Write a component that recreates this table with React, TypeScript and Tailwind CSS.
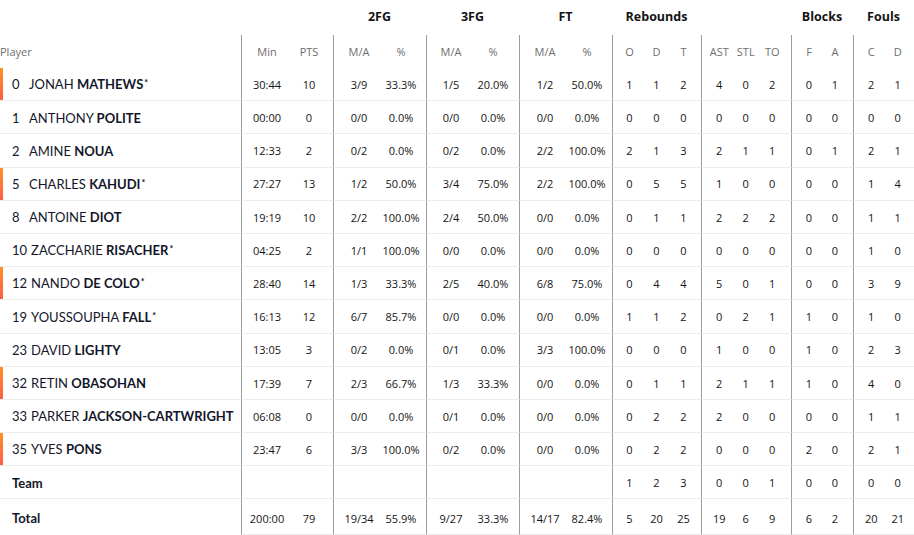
import React from "react";

type Row = {
  n: string;
  first: string;
  last: string;
  star?: boolean;
  bar?: boolean;
  s: string[];
};

const rows: Row[] = [
  { n: "0", first: "JONAH", last: "MATHEWS", star: true, bar: true, s: ["30:44", "10", "3/9", "33.3%", "1/5", "20.0%", "1/2", "50.0%", "1", "1", "2", "4", "0", "2", "0", "1", "2", "1"] },
  { n: "1", first: "ANTHONY", last: "POLITE", s: ["00:00", "0", "0/0", "0.0%", "0/0", "0.0%", "0/0", "0.0%", "0", "0", "0", "0", "0", "0", "0", "0", "0", "0"] },
  { n: "2", first: "AMINE", last: "NOUA", s: ["12:33", "2", "0/2", "0.0%", "0/2", "0.0%", "2/2", "100.0%", "2", "1", "3", "2", "1", "1", "0", "1", "2", "1"] },
  { n: "5", first: "CHARLES", last: "KAHUDI", star: true, bar: true, s: ["27:27", "13", "1/2", "50.0%", "3/4", "75.0%", "2/2", "100.0%", "0", "5", "5", "1", "0", "0", "0", "0", "1", "4"] },
  { n: "8", first: "ANTOINE", last: "DIOT", s: ["19:19", "10", "2/2", "100.0%", "2/4", "50.0%", "0/0", "0.0%", "0", "1", "1", "2", "2", "2", "0", "0", "1", "1"] },
  { n: "10", first: "ZACCHARIE", last: "RISACHER", star: true, s: ["04:25", "2", "1/1", "100.0%", "0/0", "0.0%", "0/0", "0.0%", "0", "0", "0", "0", "0", "0", "0", "0", "1", "0"] },
  { n: "12", first: "NANDO", last: "DE COLO", star: true, bar: true, s: ["28:40", "14", "1/3", "33.3%", "2/5", "40.0%", "6/8", "75.0%", "0", "4", "4", "5", "0", "1", "0", "0", "3", "9"] },
  { n: "19", first: "YOUSSOUPHA", last: "FALL", star: true, s: ["16:13", "12", "6/7", "85.7%", "0/0", "0.0%", "0/0", "0.0%", "1", "1", "2", "0", "2", "1", "1", "0", "1", "0"] },
  { n: "23", first: "DAVID", last: "LIGHTY", s: ["13:05", "3", "0/2", "0.0%", "0/1", "0.0%", "3/3", "100.0%", "0", "0", "0", "1", "0", "0", "1", "0", "2", "3"] },
  { n: "32", first: "RETIN", last: "OBASOHAN", bar: true, s: ["17:39", "7", "2/3", "66.7%", "1/3", "33.3%", "0/0", "0.0%", "0", "1", "1", "2", "1", "1", "1", "0", "4", "0"] },
  { n: "33", first: "PARKER", last: "JACKSON-CARTWRIGHT", s: ["06:08", "0", "0/0", "0.0%", "0/1", "0.0%", "0/0", "0.0%", "0", "2", "2", "2", "0", "0", "0", "0", "1", "1"] },
  { n: "35", first: "YVES", last: "PONS", bar: true, s: ["23:47", "6", "3/3", "100.0%", "0/2", "0.0%", "0/0", "0.0%", "0", "2", "2", "0", "0", "0", "2", "0", "2", "1"] },
];

const teamStats = ["", "", "", "", "", "", "", "", "1", "2", "3", "0", "0", "1", "0", "0", "0", "0"];
const totalStats = ["200:00", "79", "19/34", "55.9%", "9/27", "33.3%", "14/17", "82.4%", "5", "20", "25", "19", "6", "9", "6", "2", "20", "21"];

type Group = { w: string; pad: string; cols: string[]; title: string; labels: string[] };

const groups: Group[] = [
  { w: "w-[92px]", pad: "pl-[4px] pr-[3px]", cols: ["w-[42px]", "w-[42px]"], title: "", labels: ["Min", "PTS"] },
  { w: "w-[93px]", pad: "pl-[4px] pr-[4px]", cols: ["w-[42px]", "w-[42px]"], title: "2FG", labels: ["M/A", "%"] },
  { w: "w-[93px]", pad: "pl-[3px] pr-[5px]", cols: ["w-[42px]", "w-[42px]"], title: "3FG", labels: ["M/A", "%"] },
  { w: "w-[93px]", pad: "pl-[4px] pr-[4px]", cols: ["w-[42px]", "w-[42px]"], title: "FT", labels: ["M/A", "%"] },
  { w: "w-[89px]", pad: "pl-[3px] pr-[4px]", cols: ["w-[27px]", "w-[27px]", "w-[27px]"], title: "Rebounds", labels: ["O", "D", "T"] },
  { w: "w-[90px]", pad: "pl-[4px] pr-[5.5px]", cols: ["w-[26.5px]", "w-[26.5px]", "w-[26.5px]"], title: "", labels: ["AST", "STL", "TO"] },
  { w: "w-[62px]", pad: "pl-[4px] pr-[5px]", cols: ["w-[26px]", "w-[26px]"], title: "Blocks", labels: ["F", "A"] },
  { w: "w-[61px]", pad: "pl-[4px] pr-[3px]", cols: ["w-[26.5px]", "w-[26.5px]"], title: "Fouls", labels: ["C", "D"] },
];

const statFont = { fontFamily: '"Open Sans", "Noto Sans", sans-serif' };
const nameFont = { fontFamily: 'Lato, "Open Sans", sans-serif' };

function StatGroups({ stats, lower }: { stats: string[]; lower?: boolean }) {
  let idx = 0;
  return (
    <>
      {groups.map((g, gi) => (
        <div key={gi} className={`flex shrink-0 border-l border-b border-l-[#9b9b9b] border-b-[#ececec] ${g.pad}`}>
          {g.cols.map((c, ci) => {
            const v = stats[idx++];
            return (
              <div
                key={ci}
                className={`${c} flex items-center justify-center text-[11px] text-[#141414] whitespace-nowrap ${lower ? "pt-[5px]" : "pt-[2px]"}`}
                style={statFont}
              >
                {v}
              </div>
            );
          })}
        </div>
      ))}
    </>
  );
}

export default function App() {
  return (
    <div className="w-[914px] h-[535px] overflow-hidden bg-white">
      {/* group headings */}
      <div className="flex h-[35px]">
        <div className="w-[241px] shrink-0" />
        {groups.map((g, gi) => (
          <div
            key={gi}
            className={`${g.w} shrink-0 flex justify-center pt-[8px] text-[12.5px] font-bold text-[#141414] whitespace-nowrap`}
            style={statFont}
          >
            {g.title}
          </div>
        ))}
      </div>

      {/* column labels */}
      <div className="flex h-[33px]">
        <div className="w-[241px] shrink-0 flex items-center pt-[2px] text-[11px] text-[#6e6e6e]" style={statFont}>
          Player
        </div>
        {groups.map((g, gi) => (
          <div key={gi} className={`flex shrink-0 border-l border-[#9b9b9b] ${g.pad}`}>
            {g.cols.map((c, ci) => (
              <div key={ci} className={`${c} flex items-center justify-center pt-[2px] text-[11px] text-[#6e6e6e]`} style={statFont}>
                {g.labels[ci]}
              </div>
            ))}
          </div>
        ))}
      </div>

      {rows.map((r, ri) => (
        <div key={ri} className="flex h-[33.2px]">
          <div className="w-[241px] shrink-0 flex border-b border-[#ececec]">
            <div className={`w-[3px] shrink-0 ${r.bar ? "bg-linear-to-b from-[#ff8f1f] to-[#ff5c45]" : ""}`} />
            <div className="flex items-center pl-[9px] pt-[2px] text-[13px] text-[#13162a] whitespace-nowrap" style={nameFont}>
              <span>
                <span className="inline-block min-w-[13px]">{r.n}</span>
                <span className="ml-[4px]">{r.first} </span>
                <span className="font-bold">{r.last}</span>
                {r.star && <sup className="font-bold text-[9px] ml-[1px] top-[-0.35em]">*</sup>}
              </span>
            </div>
          </div>
          <StatGroups stats={r.s} />
        </div>
      ))}

      <div className="flex h-[33.2px]">
        <div className="w-[241px] shrink-0 flex items-center pl-[12px] pt-[2px] border-b border-[#ececec] text-[13px] font-bold text-[#13162a]" style={nameFont}>
          Team
        </div>
        <StatGroups stats={teamStats} />
      </div>

      <div className="flex h-[36px]">
        <div className="w-[241px] shrink-0 flex items-center pl-[12px] pt-[2px] text-[13px] font-bold text-[#13162a]" style={nameFont}>
          Total
        </div>
        <StatGroups stats={totalStats} lower />
      </div>
    </div>
  );
}
